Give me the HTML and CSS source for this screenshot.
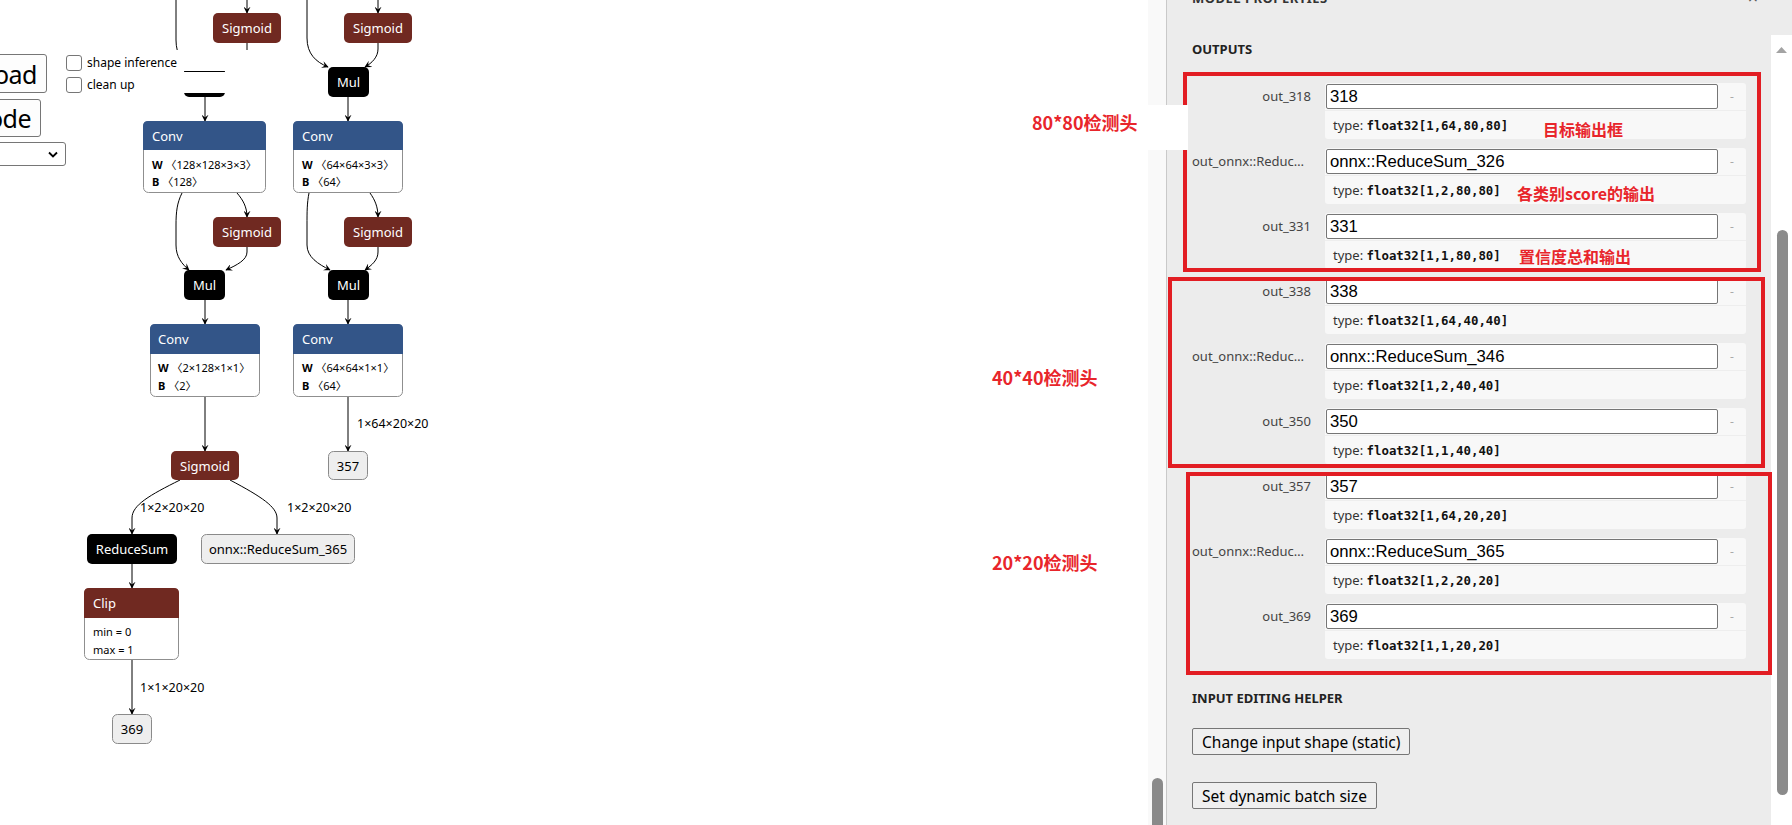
FILE: index.html
```html
<!DOCTYPE html>
<html lang="en">
<head>
<meta charset="utf-8">
<title>onnx-modifier</title>
<link rel="stylesheet" href="styles.css">
</head>
<body>
<div class="app">
  <div class="graph">
    <div class="canvas">
      <svg class="graph-svg" width="1148" height="825" viewBox="0 0 1148 825">
        <defs>
          <marker id="ah" viewBox="0 0 10 10" refX="9" refY="5" markerWidth="7" markerHeight="7" markerUnits="userSpaceOnUse" orient="auto">
            <path d="M0,0 L10,5 L0,10 L4,5 z" fill="#000"/>
          </marker>
        </defs>
        <g class="edges">
          <path d="M176,-10 V40 C176,55 183,63 190,68"/>
          <path d="M247,-5 V13"/>
          <path d="M247,43 V50 C247,58 236,63 226,68"/>
          <path d="M307,-10 V38 C307,54 316,62 328,67"/>
          <path d="M378,-5 V13"/>
          <path d="M378,43 V49 C378,57 372,63 365,67"/>
          <path d="M205,97 V121"/>
          <path d="M348,97 V121"/>
          <path d="M182,193 C177,203 176,212 176,225 V245 C176,257 182,264 189,270"/>
          <path d="M237,193 C243,200 247,207 247,217"/>
          <path d="M247,247 V252 C247,260 237,265 226,270"/>
          <path d="M309,193 C307,203 307,212 307,225 V245 C307,257 318,264 330,270"/>
          <path d="M370,193 C375,200 378,207 378,217"/>
          <path d="M378,247 V252 C378,260 372,265 365,270"/>
          <path d="M205,300 V324"/>
          <path d="M348,300 V324"/>
          <path d="M205,397 V451"/>
          <path d="M348,397 V451"/>
          <path d="M180,480 C150,495 132,505 132,518 V534"/>
          <path d="M230,480 C262,497 277,507 277,518 V534"/>
          <path d="M132,564 V588"/>
          <path d="M132,660 V714"/>
        </g>
        <g class="labels">
          <text x="357" y="423" class="el">1×64×20×20</text>
          <text x="140" y="507" class="el">1×2×20×20</text>
          <text x="287" y="507" class="el">1×2×20×20</text>
          <text x="140" y="687" class="el">1×1×20×20</text>
        </g>
        <g class="nodes">
          <rect x="213" y="13" width="68" height="30" rx="5" class="act"/>
          <text x="247" y="28" class="nt c">Sigmoid</text>
          <rect x="344" y="13" width="68" height="30" rx="5" class="act"/>
          <text x="378" y="28" class="nt c">Sigmoid</text>

          <rect x="184" y="67" width="41" height="30" rx="5" class="blk"/>
          <text x="204.5" y="82" class="nt c">Mul</text>
          <rect x="328" y="67" width="41" height="30" rx="5" class="blk"/>
          <text x="348.5" y="82" class="nt c">Mul</text>

          <rect x="143.5" y="121.5" width="122" height="71" rx="5" class="body"/>
          <path d="M143,150 V126 Q143,121 148,121 H261 Q266,121 266,126 V150 Z" class="layer"/>
          <text x="152" y="135.5" class="nt">Conv</text>
          <text x="152" y="164" class="at"><tspan class="b">W</tspan> 〈128×128×3×3〉</text>
          <text x="152" y="181" class="at"><tspan class="b">B</tspan> 〈128〉</text>

          <rect x="293.5" y="121.5" width="109" height="71" rx="5" class="body"/>
          <path d="M293,150 V126 Q293,121 298,121 H398 Q403,121 403,126 V150 Z" class="layer"/>
          <text x="302" y="135.5" class="nt">Conv</text>
          <text x="302" y="164" class="at"><tspan class="b">W</tspan> 〈64×64×3×3〉</text>
          <text x="302" y="181" class="at"><tspan class="b">B</tspan> 〈64〉</text>

          <rect x="213" y="217" width="68" height="30" rx="5" class="act"/>
          <text x="247" y="232" class="nt c">Sigmoid</text>
          <rect x="344" y="217" width="68" height="30" rx="5" class="act"/>
          <text x="378" y="232" class="nt c">Sigmoid</text>

          <rect x="184" y="270" width="41" height="30" rx="5" class="blk"/>
          <text x="204.5" y="285" class="nt c">Mul</text>
          <rect x="328" y="270" width="41" height="30" rx="5" class="blk"/>
          <text x="348.5" y="285" class="nt c">Mul</text>

          <rect x="150.5" y="324.5" width="109" height="72" rx="5" class="body"/>
          <path d="M150,354 V329 Q150,324 155,324 H255 Q260,324 260,329 V354 Z" class="layer"/>
          <text x="158" y="339" class="nt">Conv</text>
          <text x="158" y="367" class="at"><tspan class="b">W</tspan> 〈2×128×1×1〉</text>
          <text x="158" y="385" class="at"><tspan class="b">B</tspan> 〈2〉</text>

          <rect x="293.5" y="324.5" width="109" height="72" rx="5" class="body"/>
          <path d="M293,354 V329 Q293,324 298,324 H398 Q403,324 403,329 V354 Z" class="layer"/>
          <text x="302" y="339" class="nt">Conv</text>
          <text x="302" y="367" class="at"><tspan class="b">W</tspan> 〈64×64×1×1〉</text>
          <text x="302" y="385" class="at"><tspan class="b">B</tspan> 〈64〉</text>

          <rect x="171" y="451" width="68" height="29" rx="5" class="act"/>
          <text x="205" y="465.5" class="nt c">Sigmoid</text>

          <rect x="328.5" y="451.5" width="39" height="28" rx="5" class="io"/>
          <text x="348" y="465.5" class="it c">357</text>

          <rect x="87" y="534" width="90" height="30" rx="5" class="blk"/>
          <text x="132" y="549" class="nt c">ReduceSum</text>

          <rect x="201.5" y="534.5" width="153" height="29" rx="5" class="io"/>
          <text x="278" y="549" class="it c">onnx::ReduceSum_365</text>

          <rect x="84.5" y="588.5" width="94" height="71" rx="5" class="body"/>
          <path d="M84,618 V593 Q84,588 89,588 H174 Q179,588 179,593 V618 Z" class="act"/>
          <text x="93" y="603" class="nt">Clip</text>
          <text x="93" y="631" class="at">min = 0</text>
          <text x="93" y="649" class="at">max = 1</text>

          <rect x="112.5" y="714.5" width="39" height="29" rx="5" class="io"/>
          <text x="132" y="729" class="it c">369</text>
        </g>
      </svg>

      <div class="toolbar">
        <div class="tb-top">
          <div class="tb-cell"><button class="tb-btn">Download</button></div>
          <div class="tb-checks">
            <label class="tb-check"><span class="cb"></span><span>shape inference</span></label>
            <label class="tb-check"><span class="cb"></span><span>clean up</span></label>
          </div>
        </div>
        <div class="tb-cell tb-cell-add"><button class="tb-btn tb-btn-add">Add node</button></div>
        <div class="tb-cell tb-cell-sel">
          <div class="tb-select">
            <span class="tb-select-text">Abs</span>
            <svg class="chev" width="10" height="7" viewBox="0 0 10 7"><path d="M1,1.5 L5,5.5 L9,1.5" fill="none" stroke="#000" stroke-width="1.8"/></svg>
          </div>
        </div>
      </div>
    </div>
    <div class="gtrack"><div class="gthumb"></div></div>
  </div>

  <aside class="sidebar">
    <div class="sb-header">
      <span class="sb-title">MODEL PROPERTIES</span>
      <span class="sb-close">×</span>
    </div>
    <div class="sb-body">
      <div class="sb-content">
        <h3 class="sec-title">OUTPUTS</h3>
        <div class="out-list">
          <div class="out-row"><div class="out-label">out_318</div><div class="out-box"><div class="out-top"><input class="out-input" value="318"><span class="minus">-</span></div><div class="out-type">type: <code>float32[1,64,80,80]</code></div></div></div>
          <div class="out-row"><div class="out-label">out_onnx::ReduceSum_326</div><div class="out-box"><div class="out-top"><input class="out-input" value="onnx::ReduceSum_326"><span class="minus">-</span></div><div class="out-type">type: <code>float32[1,2,80,80]</code></div></div></div>
          <div class="out-row"><div class="out-label">out_331</div><div class="out-box"><div class="out-top"><input class="out-input" value="331"><span class="minus">-</span></div><div class="out-type">type: <code>float32[1,1,80,80]</code></div></div></div>
          <div class="out-row"><div class="out-label">out_338</div><div class="out-box"><div class="out-top"><input class="out-input" value="338"><span class="minus">-</span></div><div class="out-type">type: <code>float32[1,64,40,40]</code></div></div></div>
          <div class="out-row"><div class="out-label">out_onnx::ReduceSum_346</div><div class="out-box"><div class="out-top"><input class="out-input" value="onnx::ReduceSum_346"><span class="minus">-</span></div><div class="out-type">type: <code>float32[1,2,40,40]</code></div></div></div>
          <div class="out-row"><div class="out-label">out_350</div><div class="out-box"><div class="out-top"><input class="out-input" value="350"><span class="minus">-</span></div><div class="out-type">type: <code>float32[1,1,40,40]</code></div></div></div>
          <div class="out-row"><div class="out-label">out_357</div><div class="out-box"><div class="out-top"><input class="out-input" value="357"><span class="minus">-</span></div><div class="out-type">type: <code>float32[1,64,20,20]</code></div></div></div>
          <div class="out-row"><div class="out-label">out_onnx::ReduceSum_365</div><div class="out-box"><div class="out-top"><input class="out-input" value="onnx::ReduceSum_365"><span class="minus">-</span></div><div class="out-type">type: <code>float32[1,2,20,20]</code></div></div></div>
          <div class="out-row"><div class="out-label">out_369</div><div class="out-box"><div class="out-top"><input class="out-input" value="369"><span class="minus">-</span></div><div class="out-type">type: <code>float32[1,1,20,20]</code></div></div></div>
        </div>
        <h3 class="sec-title sec-helper">INPUT EDITING HELPER</h3>
        <button class="sb-btn">Change input shape (static)</button>
        <button class="sb-btn sb-btn-2">Set dynamic batch size</button>
      </div>
      <div class="sb-scroll">
        <svg class="sb-up" width="11" height="6" viewBox="0 0 11 6"><path d="M0,6 L5.5,0 L11,6 z" fill="#a3a3a3"/></svg>
        <div class="sb-thumb"></div>
      </div>
    </div>
  </aside>

  <div class="rbox rbox-1"></div>
  <div class="rbox rbox-2"></div>
  <div class="rbox rbox-3"></div>

  <div class="note-bg"><span class="note note-lg">80*80检测头</span></div>
  <span class="note note-lg n40">40*40检测头</span>
  <span class="note note-lg n20">20*20检测头</span>
  <span class="note n-a">目标输出框</span>
  <span class="note n-b">各类别score的输出</span>
  <span class="note n-c">置信度总和输出</span>
</div>
</body>
</html>
```
FILE: styles.css
```css
* { box-sizing: border-box; }
html, body { margin: 0; padding: 0; }
body {
  font-family: "Noto Sans", "Noto Sans CJK SC", sans-serif;
  background: #fff;
  overflow: hidden;
}
.app {
  position: relative;
  width: 1792px;
  height: 825px;
  display: flex;
  overflow: hidden;
}

/* ---------- graph ---------- */
.graph { width: 1166px; flex: none; display: flex; }
.canvas { flex: 1; position: relative; overflow: hidden; background: #fff; }
.graph-svg { display: block; font-family: "Noto Sans", "Noto Sans CJK SC", sans-serif; }
.edges path { fill: none; stroke: #000; stroke-width: 1; marker-end: url(#ah); }
.el { font-size: 12.5px; fill: #000; dominant-baseline: central; }
.act { fill: #702921; }
.layer { fill: #335588; }
.blk { fill: #000; }
.body { fill: #fff; stroke: #8f8f8f; stroke-width: 1; }
.io { fill: #eeeeee; stroke: #8a8a8a; stroke-width: 1; }
.nt { fill: #fff; font-size: 13px; dominant-baseline: central; }
.it { fill: #000; font-size: 13px; dominant-baseline: central; }
.c { text-anchor: middle; }
.at { fill: #000; font-size: 11px; dominant-baseline: central; }
.b { font-weight: 700; }

.gtrack {
  width: 18px; flex: none; background: #f9f9f9;
  display: flex; flex-direction: column; justify-content: flex-end;
}
.gthumb { width: 11px; height: 47px; margin-left: 4px; background: #8a8a8a; border-radius: 6px 6px 0 0; }

/* ---------- toolbar overlay ---------- */
.toolbar { position: absolute; left: 0; top: 50px; width: 255px; }
.tb-top { display: flex; height: 43px; }
.tb-cell {
  width: 66px; flex: none;
  display: flex; justify-content: flex-end; align-items: flex-end;
  padding-right: 19px;
}
.tb-btn {
  flex: none;
  height: 39px;
  padding: 0 9px;
  font-family: "Noto Sans", sans-serif;
  font-size: 25px;
  letter-spacing: -0.5px;
  line-height: 36px;
  color: #000;
  background: #fdfdfd;
  border: 1px solid #767676;
  border-radius: 3px;
  white-space: nowrap;
}
.tb-cell-add { margin-top: 6px; padding-right: 25px; }
.tb-btn-add { height: 38px; }
.tb-cell-sel { margin-top: 5px; padding-right: 0; }
.tb-select {
  flex: none;
  width: 200px; height: 24px;
  border: 1px solid #767676; border-radius: 3px;
  background: #fff;
  display: flex; align-items: center; justify-content: space-between;
  padding: 0 7px 0 6px;
  font-size: 14px;
}
.chev { display: block; }
.tb-checks { flex: none; width: 189px; display: flex; flex-direction: column; gap: 1px; }
.tb-check {
  height: 21px; background: #fff;
  display: flex; align-items: flex-end; gap: 5px;
  font-size: 12px; line-height: 16px; color: #000;
}
.cb {
  width: 16px; height: 16px; flex: none;
  border: 1px solid #767676; border-radius: 3px; background: #fff;
}

/* ---------- sidebar ---------- */
.sidebar {
  width: 626px; flex: none;
  border-left: 1px solid #c9c9c9;
  background: #ececec;
  display: flex; flex-direction: column;
}
.sb-header {
  height: 35px; flex: none;
  display: flex; justify-content: space-between; align-items: flex-start;
  padding: 0 34px 0 25px;
}
.sb-title {
  margin-top: -10px;
  font-size: 13px; line-height: 16px; font-weight: 700; color: #333;
  letter-spacing: 0.5px;
}
.sb-close { margin-top: -12px; font-size: 18px; line-height: 18px; color: #555; }
.sb-body { flex: 1; display: flex; min-height: 0; }
.sb-content { flex: 1; padding: 6px 25px 0 25px; overflow: hidden; }
.sec-title {
  margin: 0;
  font-size: 13px; line-height: 16px; font-weight: 700; color: #222;
}
.out-list { margin-top: 26px; display: flex; flex-direction: column; gap: 9px; }
.out-row { display: grid; grid-template-columns: 119px 1fr; column-gap: 14px; align-items: start; }
.out-label {
  height: 27px; line-height: 27px;
  text-align: right; font-size: 13px; color: #444;
  white-space: nowrap; overflow: hidden; text-overflow: ellipsis;
}
.out-box { background: #f8f8f8; border-radius: 3px; }
.out-top { display: flex; align-items: center; padding: 1px 0 1px 1px; }
.out-input {
  flex: 1; min-width: 0;
  height: 25px; margin: 0;
  padding: 0 3px;
  border: 1px solid #767676; border-radius: 2px;
  background: #fff;
  font-family: "Liberation Sans", Arial, sans-serif;
  font-size: 16.7px; color: #000;
}
.minus { width: 28px; flex: none; text-align: center; font-size: 12px; color: #aaa; }
.out-type {
  height: 29px; line-height: 28px;
  border-top: 1px solid #eeeeee;
  padding-left: 8px;
  font-size: 13px; color: #333;
  white-space: nowrap;
}
.out-type code {
  font-family: "DejaVu Sans Mono", "Liberation Mono", monospace;
  font-size: 12.4px; font-weight: 700; color: #111;
}
.sec-helper { margin-top: 31px; }
.sb-btn {
  display: block;
  margin-top: 22px;
  height: 27px;
  padding: 0 9px;
  font-family: "Noto Sans", sans-serif;
  font-size: 15.5px; line-height: 24px; color: #000;
  background: #efefef;
  border: 1px solid #767676; border-radius: 2px;
}
.sb-btn-2 { margin-top: 27px; }
.sb-scroll {
  width: 21px; flex: none; background: #fff;
  display: flex; flex-direction: column; align-items: flex-start;
}
.sb-up { display: block; margin: 12px 0 0 5px; }
.sb-thumb {
  width: 11px; height: 565px;
  margin: 177px 0 0 6px;
  background: #8b8b8b; border-radius: 6px;
}

/* ---------- annotations ---------- */
.rbox { position: absolute; border: 4px solid #e21d23; }
.rbox-1 { left: 1183px; top: 72px; width: 578px; height: 200px; }
.rbox-2 { left: 1168px; top: 277px; width: 597px; height: 191px; }
.rbox-3 { left: 1186px; top: 472px; width: 586px; height: 203px; }

.note {
  position: absolute;
  font-family: "Noto Sans CJK SC", "Noto Sans", sans-serif;
  font-weight: 700; color: #e8252b;
  font-size: 16px; line-height: 16px;
  white-space: nowrap;
}
.note-lg { font-size: 18px; line-height: 18px; }
.note-bg {
  position: absolute; left: 1023px; top: 105px; width: 165px; height: 45px;
  background: #fff;
  padding: 8px 0 0 9px;
}
.note-bg .note { position: static; }
.n40 { left: 992px; top: 368px; }
.n20 { left: 992px; top: 553px; }
.n-a { left: 1543px; top: 121px; }
.n-b { left: 1517px; top: 185px; }
.n-c { left: 1519px; top: 248px; }
```
